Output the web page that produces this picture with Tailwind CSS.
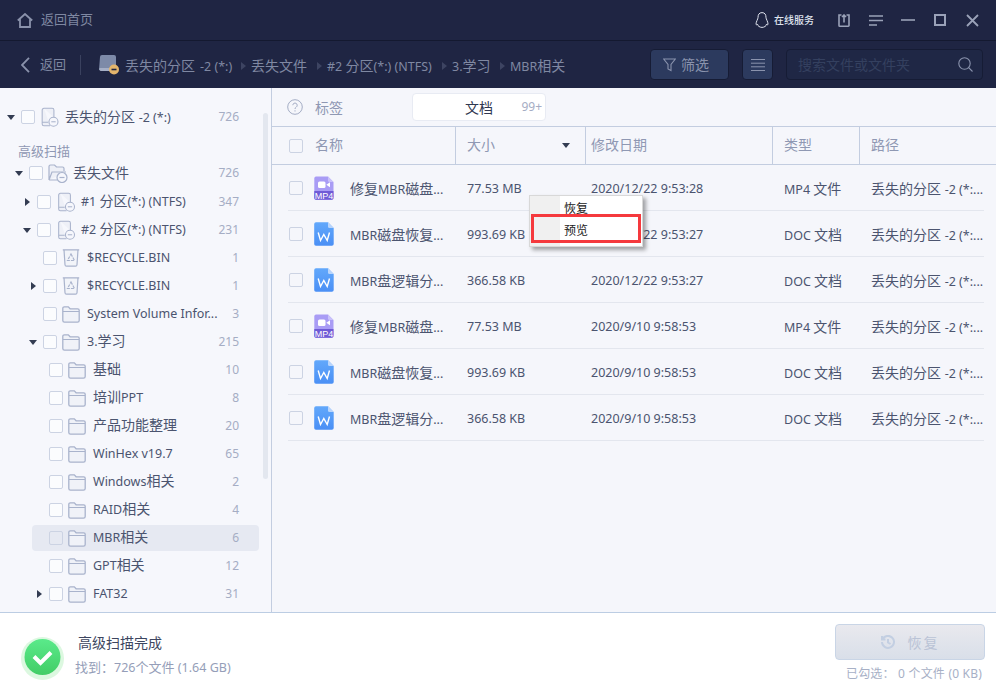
<!DOCTYPE html>
<html lang="zh"><head><meta charset="utf-8"><script src="https://cdn.jsdelivr.net/npm/@tailwindcss/browser@4"></script></head>
<body class="m-0 overflow-hidden">
<svg class="absolute w-0 h-0" width="0" height="0">
<defs>
<linearGradient id="dg" x1="0" y1="0" x2="0" y2="1"><stop offset="0" stop-color="#62a8fb"/><stop offset="1" stop-color="#4a8ff5"/></linearGradient>
<symbol id="drive" viewBox="0 0 20 23"><path d="M3 1.500h9.500a2 2 0 0 1 2 2v8.500M3 1.500a2 2 0 0 0-2 2v16a2 2 0 0 0 2 2h7M1 17.500h7" fill="#eef0f7" stroke="#a9b3cc" stroke-width="1.200"/><circle cx="14" cy="17" r="5.200" fill="#f6f7fc" stroke="#a9b3cc" stroke-width="1.200"/><path d="M11.500 17h5" stroke="#a9b3cc" stroke-width="1.200"/></symbol>
<symbol id="lostfolder" viewBox="0 0 20 20"><path d="M1 17V3.500a1.500 1.500 0 0 1 1.500-1.500h4l2 2h6a1.500 1.500 0 0 1 1.500 1.500V8M1 17l3-8h14M1 17h8" fill="#eef0f7" stroke="#a9b3cc" stroke-width="1.200"/><circle cx="14" cy="14.500" r="5" fill="#f6f7fc" stroke="#a9b3cc" stroke-width="1.200"/><path d="M11.500 14.500h5" stroke="#a9b3cc" stroke-width="1.200"/></symbol>
<symbol id="folder" viewBox="0 0 18 17"><path d="M.8 14.500V2.300A1.500 1.500 0 0 1 2.300.8h4l1.800 2h7.600a1.500 1.500 0 0 1 1.500 1.500v10.200a1.700 1.700 0 0 1-1.700 1.700H2.500a1.700 1.700 0 0 1-1.700-1.700z" fill="#f0f2f8" stroke="#a9b3cc" stroke-width="1.300"/><path d="M1 5.500h16" stroke="#a9b3cc" stroke-width="1"/></symbol>
<symbol id="bin" viewBox="0 0 18 18"><path d="M.8.800h16.400M2 .8l1 15a1.500 1.500 0 0 0 1.500 1.400h9a1.500 1.500 0 0 0 1.500-1.400l1-15" fill="#f2f4f9" stroke="#a9b3cc" stroke-width="1.200"/><path d="M9 5l3.500 6.500h-7z" fill="none" stroke="#a9b3cc" stroke-width="1.200" stroke-dasharray="3 1"/></symbol>
<symbol id="mp4" viewBox="0 0 20 24"><path d="M2 .5h12l5.500 5.500v16a1.800 1.800 0 0 1-1.800 1.800H2A1.800 1.800 0 0 1 .3 22V2A1.800 1.800 0 0 1 2 .5z" fill="#a99cf5"/><path d="M.3 15h19.200v7a1.800 1.800 0 0 1-1.800 1.800H2A1.800 1.800 0 0 1 .3 22z" fill="#6f5bd6"/><rect x="4" y="5.500" width="7.500" height="6.500" rx="1.500" fill="#fff"/><path d="M12.300 8.700l3.700-2.500v5z" fill="#fff"/><path d="M14 .5l5.500 5.500H15.500a1.500 1.500 0 0 1-1.500-1.500z" fill="#c9c1fa"/><text x="9.900" y="22.700" text-anchor="middle" font-family="Liberation Sans" font-size="9" fill="#fff">MP4</text></symbol>
<symbol id="doc" viewBox="0 0 20 24"><path d="M2 .3h12l5.700 5.700v16a1.800 1.800 0 0 1-1.800 1.800H2A1.800 1.800 0 0 1 .2 22V2A1.800 1.800 0 0 1 2 .3z" fill="url(#dg)"/><path d="M14 .3l5.700 5.700H15.500A1.500 1.500 0 0 1 14 4.500z" fill="#b9d5fc"/><path d="M4.200 10.500l2.300 8 3.300-6 3.400 6 2.300-8" fill="none" stroke="#fff" stroke-width="1.400"/></symbol>
<symbol id="left" viewBox="0 0 5 8"><path d="M0 0l5 4-5 4z" fill="#333c52"/></symbol>
<symbol id="down" viewBox="0 0 8 5"><path d="M0 0h8L4 5z" fill="#333c52"/></symbol>
</defs>
</svg>
<div class="relative w-[996px] h-[696px] flex flex-col overflow-hidden bg-[#f5f6fb] text-[14px] text-[#4b546f] font-['Noto_Sans','Noto_Sans_CJK_SC',sans-serif]">

<!-- title bar -->
<header class="h-[41px] shrink-0 flex items-center bg-[#1f2543] border-b border-[#141930] pl-[17px] pr-[17px]">
<svg width="16" height="15" viewBox="0 0 16 15" fill="none" stroke="#8a92ab" stroke-width="1.800"><path d="M.8 7.500L8 1l7.200 6.500M3 6v8h10V6"/></svg>
<span class="ml-[8px] text-[13px] text-[#7f88a2]">返回首页</span>
<svg class="ml-auto" width="14" height="16" viewBox="0 0 14 16" fill="none" stroke="#dfe3ee" stroke-width="1"><path d="M7 .6c3 0 4 2.200 4 5 0 1.500 2 4 2 6.500 0 1-1 .8-1.500 0 0 2-2.500 3.300-4.500 3.300s-4.500-1.300-4.500-3.300c-.5.800-1.500 1-1.500 0C1 9.600 3 7.100 3 5.600c0-2.800 1-5 4-5z"/></svg>
<span class="ml-[5px] text-[10px] font-medium text-[#dfe3ee] w-[40px] whitespace-nowrap">在线服务</span>
<svg class="ml-[24px]" width="12" height="13" viewBox="0 0 12 13" fill="none" stroke="#9aa2b8" stroke-width="1.600"><path d="M3.500 1H1v10.500a.7.700 0 0 0 .7.700h8.600a.7.700 0 0 0 .7-.7V1H8.500M6 8.500V1M4 3l2-2 2 2"/></svg>
<svg class="ml-[19px]" width="14" height="11" viewBox="0 0 14 11" fill="none" stroke="#9aa2b8" stroke-width="1.600"><path d="M0 1h14M0 5.500h14M0 10h8"/></svg>
<svg class="ml-[18px]" width="14" height="2" viewBox="0 0 14 2"><path d="M0 1h14" stroke="#9aa2b8" stroke-width="1.600"/></svg>
<svg class="ml-[19px]" width="12" height="12" viewBox="0 0 12 12" fill="none" stroke="#9aa2b8" stroke-width="2"><rect x="1" y="1" width="10" height="10"/></svg>
<svg class="ml-[20px]" width="13" height="13" viewBox="0 0 13 13" fill="none" stroke="#9aa2b8" stroke-width="1.800"><path d="M1 1l11 11M12 1L1 12"/></svg>
</header>

<!-- toolbar -->
<div class="h-[47px] shrink-0 flex items-center bg-[#1f2543] pl-[21px] text-[#7f88a2]">
<svg width="9" height="16" viewBox="0 0 9 16" fill="none" stroke="#8a92ab" stroke-width="1.800"><path d="M8 .8L1 8l7 7.200"/></svg>
<span class="ml-[10px] text-[13px]">返回</span>
<span class="ml-[14px] w-px h-[20px] bg-[#3a415e]"></span>
<svg class="ml-[18px]" width="21" height="20" viewBox="0 0 21 20"><path d="M3 0h12a2 2 0 0 1 2 2v13H0l1-13a2 2 0 0 1 2-2z" fill="#7d8aa8"/><path d="M.5 13H17v3H2a1.500 1.500 0 0 1-1.500-1.500z" fill="#a6afc6"/><circle cx="15" cy="14.500" r="5" fill="#e3b56c"/><path d="M12.500 14.500h5" stroke="#1f2543" stroke-width="1.600"/></svg>
<span class="ml-[5px] mt-[2px] whitespace-nowrap">丢失的分区</span><span class="ml-[5px] mt-[5px] w-[31px] text-[12.500px] whitespace-nowrap">-2 (*:)</span>
<svg class="ml-[10px] mt-[2px]" width="5" height="8" viewBox="0 0 5 8"><path d="M0 0l5 4-5 4z" fill="#3d4462"/></svg>
<span class="ml-[5px] mt-[2px] whitespace-nowrap">丢失文件</span>
<svg class="ml-[10px] mt-[2px]" width="5" height="8" viewBox="0 0 5 8"><path d="M0 0l5 4-5 4z" fill="#3d4462"/></svg>
<span class="ml-[5px] mt-[2px] whitespace-nowrap w-[105px]"><span class="text-[12.500px]">#2 </span>分区<span class="text-[12.500px]">(*:) (NTFS)</span></span>
<svg class="ml-[10px] mt-[2px]" width="5" height="8" viewBox="0 0 5 8"><path d="M0 0l5 4-5 4z" fill="#3d4462"/></svg>
<span class="ml-[5px] mt-[2px] whitespace-nowrap w-[38px]"><span class="text-[12.500px]">3.</span>学习</span>
<svg class="ml-[10px] mt-[2px]" width="5" height="8" viewBox="0 0 5 8"><path d="M0 0l5 4-5 4z" fill="#3d4462"/></svg>
<span class="ml-[5px] mt-[2px] whitespace-nowrap"><span class="text-[12.500px]">MBR</span>相关</span>
<div class="ml-auto flex items-center pr-[13px]">
<button class="w-[79px] h-[31px] rounded-[4px] bg-[#2c3a5e] border border-[#161c35] flex items-center pl-[12px] text-[#8a93ad]"><svg width="13" height="14" viewBox="0 0 13 14" fill="none" stroke="#8a93ad" stroke-width="1.100"><path d="M.7 1h11.600L8 6.500v6l-3-1.500V6.500z"/></svg><span class="ml-[5px]">筛选</span></button>
<button class="ml-[13px] w-[31px] h-[31px] rounded-[4px] bg-[#2c3a5e] border border-[#161c35] flex items-center justify-center"><svg width="14" height="12" viewBox="0 0 14 12" stroke="#8a93ad"><path d="M0 .5h14M0 4.200h14M0 7.800h14M0 11.500h14"/></svg></button>
<div class="ml-[13px] w-[197px] h-[31px] rounded-[4px] bg-[#1f2745] border border-[#161c35] flex items-center pl-[11px] pr-[9px] text-[#34405f]"><span>搜索文件或文件夹</span><svg class="ml-auto" width="15" height="15" viewBox="0 0 15 15" fill="none" stroke="#8a93ad" stroke-width="1.100"><circle cx="6.500" cy="6.500" r="5.700"/><path d="M10.700 10.700l3.800 3.800"/></svg></div>
</div>
</div>

<!-- main -->
<main class="flex-1 min-h-0 flex">
<!-- sidebar -->
<aside class="relative w-[272px] shrink-0 border-r border-[#c3cde0] bg-[#f6f7fc] overflow-hidden pt-[15px]">
<div class="absolute left-[263px] top-[25px] w-[5px] h-[366px] rounded-full bg-[#e3e7ef]"></div>

<div class="h-[28px] flex items-center pl-[7px] pr-[32px]"><svg width="8" height="5"><use href="#down"/></svg><span class="ml-[6px] w-[14px] h-[14px] rounded-[2px] border border-[#ccd3e3] bg-white/60"></span><svg class="ml-[5px]" width="20" height="20"><use href="#drive"/></svg><span class="ml-[5px] whitespace-nowrap">丢失的分区 <span class="text-[12.500px]">-2 (*:)</span></span><span class="ml-auto text-[12px] text-[#a5adc4]">726</span></div>
<div class="h-[28px] flex items-end pl-[18px] text-[13px] leading-[16px] text-[#8f98b3]">高级扫描</div>
<div class="h-[29px] pb-px flex items-center pl-[15px] pr-[32px]"><svg width="8" height="5"><use href="#down"/></svg><span class="ml-[6px] w-[14px] h-[14px] rounded-[2px] border border-[#ccd3e3] bg-white/60"></span><svg class="ml-[5px]" width="20" height="20"><use href="#lostfolder"/></svg><span class="ml-[5px] -mt-[2px] whitespace-nowrap">丢失文件</span><span class="ml-auto text-[12px] text-[#a5adc4]">726</span></div>
<div class="h-[28px] flex items-center pl-[25px] pr-[32px]"><svg class="mr-[7px]" width="5" height="8"><use href="#left"/></svg><span class="w-[14px] h-[14px] rounded-[2px] border border-[#ccd3e3] bg-white/60"></span><svg class="ml-[6px]" width="19" height="20"><use href="#drive"/></svg><span class="ml-[5px] -mt-[2px] whitespace-nowrap"><span class="text-[12.500px]">#1 </span>分区<span class="text-[12.500px]">(*:) (NTFS)</span></span><span class="ml-auto text-[12px] text-[#a5adc4]">347</span></div>
<div class="h-[28px] flex items-center pl-[23px] pr-[32px]"><svg class="mr-[6px]" width="8" height="5"><use href="#down"/></svg><span class="w-[14px] h-[14px] rounded-[2px] border border-[#ccd3e3] bg-white/60"></span><svg class="ml-[6px]" width="19" height="20"><use href="#drive"/></svg><span class="ml-[5px] -mt-[2px] whitespace-nowrap"><span class="text-[12.500px]">#2 </span>分区<span class="text-[12.500px]">(*:) (NTFS)</span></span><span class="ml-auto text-[12px] text-[#a5adc4]">231</span></div>
<div class="h-[28px] flex items-center pl-[43px] pr-[32px]"><span class="w-[14px] h-[14px] rounded-[2px] border border-[#ccd3e3] bg-white/60"></span><svg class="ml-[5px]" width="18" height="18"><use href="#bin"/></svg><span class="ml-[7px] whitespace-nowrap text-[12.500px]">$RECYCLE.BIN</span><span class="ml-auto text-[12px] text-[#a5adc4]">1</span></div>
<div class="h-[28px] flex items-center pl-[31px] pr-[32px]"><svg class="mr-[7px]" width="5" height="8"><use href="#left"/></svg><span class="w-[14px] h-[14px] rounded-[2px] border border-[#ccd3e3] bg-white/60"></span><svg class="ml-[5px]" width="18" height="18"><use href="#bin"/></svg><span class="ml-[7px] whitespace-nowrap text-[12.500px]">$RECYCLE.BIN</span><span class="ml-auto text-[12px] text-[#a5adc4]">1</span></div>
<div class="h-[28px] flex items-center pl-[43px] pr-[32px]"><span class="w-[14px] h-[14px] rounded-[2px] border border-[#ccd3e3] bg-white/60"></span><svg class="ml-[5px]" width="18" height="17"><use href="#folder"/></svg><span class="ml-[7px] whitespace-nowrap text-[12.500px]">System Volume Infor...</span><span class="ml-auto text-[12px] text-[#a5adc4]">3</span></div>
<div class="h-[28px] flex items-center pl-[29px] pr-[32px]"><svg class="mr-[6px]" width="8" height="5"><use href="#down"/></svg><span class="w-[14px] h-[14px] rounded-[2px] border border-[#ccd3e3] bg-white/60"></span><svg class="ml-[5px]" width="18" height="17"><use href="#folder"/></svg><span class="ml-[7px] -mt-[2px] whitespace-nowrap"><span class="text-[12.500px]">3.</span>学习</span><span class="ml-auto text-[12px] text-[#a5adc4]">215</span></div>
<div class="h-[28px] flex items-center pl-[49px] pr-[32px]"><span class="w-[14px] h-[14px] rounded-[2px] border border-[#ccd3e3] bg-white/60"></span><svg class="ml-[5px]" width="18" height="17"><use href="#folder"/></svg><span class="ml-[7px] -mt-[4px] whitespace-nowrap">基础</span><span class="ml-auto text-[12px] text-[#a5adc4]">10</span></div>
<div class="h-[28px] flex items-center pl-[49px] pr-[32px]"><span class="w-[14px] h-[14px] rounded-[2px] border border-[#ccd3e3] bg-white/60"></span><svg class="ml-[5px]" width="18" height="17"><use href="#folder"/></svg><span class="ml-[7px] -mt-[2px] whitespace-nowrap">培训<span class="text-[12.500px]">PPT</span></span><span class="ml-auto text-[12px] text-[#a5adc4]">8</span></div>
<div class="h-[28px] flex items-center pl-[49px] pr-[32px]"><span class="w-[14px] h-[14px] rounded-[2px] border border-[#ccd3e3] bg-white/60"></span><svg class="ml-[5px]" width="18" height="17"><use href="#folder"/></svg><span class="ml-[7px] -mt-[4px] whitespace-nowrap">产品功能整理</span><span class="ml-auto text-[12px] text-[#a5adc4]">20</span></div>
<div class="h-[28px] flex items-center pl-[49px] pr-[32px]"><span class="w-[14px] h-[14px] rounded-[2px] border border-[#ccd3e3] bg-white/60"></span><svg class="ml-[5px]" width="18" height="17"><use href="#folder"/></svg><span class="ml-[7px] whitespace-nowrap text-[12.500px]">WinHex v19.7</span><span class="ml-auto text-[12px] text-[#a5adc4]">65</span></div>
<div class="h-[28px] flex items-center pl-[49px] pr-[32px]"><span class="w-[14px] h-[14px] rounded-[2px] border border-[#ccd3e3] bg-white/60"></span><svg class="ml-[5px]" width="18" height="17"><use href="#folder"/></svg><span class="ml-[7px] -mt-[2px] whitespace-nowrap"><span class="text-[12.500px]">Windows</span>相关</span><span class="ml-auto text-[12px] text-[#a5adc4]">2</span></div>
<div class="h-[28px] flex items-center pl-[49px] pr-[32px]"><span class="w-[14px] h-[14px] rounded-[2px] border border-[#ccd3e3] bg-white/60"></span><svg class="ml-[5px]" width="18" height="17"><use href="#folder"/></svg><span class="ml-[7px] -mt-[2px] whitespace-nowrap"><span class="text-[12.500px]">RAID</span>相关</span><span class="ml-auto text-[12px] text-[#a5adc4]">4</span></div>
<div class="h-[26px] my-[1px] ml-[32px] mr-[12px] rounded-[4px] bg-[#e6e9f2] flex items-center pl-[17px] pr-[20px]"><span class="w-[14px] h-[14px] rounded-[2px] border border-[#ccd3e3]"></span><svg class="ml-[5px]" width="18" height="17"><use href="#folder"/></svg><span class="ml-[7px] -mt-[2px] whitespace-nowrap"><span class="text-[12.500px]">MBR</span>相关</span><span class="ml-auto text-[12px] text-[#a5adc4]">6</span></div>
<div class="h-[28px] flex items-center pl-[49px] pr-[32px]"><span class="w-[14px] h-[14px] rounded-[2px] border border-[#ccd3e3] bg-white/60"></span><svg class="ml-[5px]" width="18" height="17"><use href="#folder"/></svg><span class="ml-[7px] -mt-[2px] whitespace-nowrap"><span class="text-[12.500px]">GPT</span>相关</span><span class="ml-auto text-[12px] text-[#a5adc4]">12</span></div>
<div class="h-[28px] flex items-center pl-[37px] pr-[32px]"><svg class="mr-[7px]" width="5" height="8"><use href="#left"/></svg><span class="w-[14px] h-[14px] rounded-[2px] border border-[#ccd3e3] bg-white/60"></span><svg class="ml-[5px]" width="18" height="17"><use href="#folder"/></svg><span class="ml-[7px] whitespace-nowrap text-[12.500px]">FAT32</span><span class="ml-auto text-[12px] text-[#a5adc4]">31</span></div>
</aside>

<!-- content -->
<section class="flex-1 min-w-0 flex flex-col">
<div class="h-[39px] shrink-0 flex items-center pl-[15px] border-b border-[#c3cde0]">
<svg width="16" height="16" viewBox="0 0 16 16" fill="none" stroke="#a4adc5" stroke-width="1"><circle cx="8" cy="8" r="7.300"/><path d="M5.800 6.200a2.200 2.200 0 1 1 3.400 1.900c-.8.500-1.200 1-1.200 1.900M8 11.300v1.200"/></svg>
<span class="ml-[12px] text-[#8f98b3]">标签</span>
<div class="ml-[69px] w-[134px] h-[28px] rounded-[4px] bg-white border border-[#e8ebf3] flex items-center pl-[52px] pr-[3px] text-[#2f3750]"><span>文档</span><span class="ml-auto text-[12px] text-[#a5adc4]">99+</span></div>
</div>
<div class="h-[38px] shrink-0 flex items-stretch border-b border-[#c3cde0] text-[#8f98b3]">
<div class="w-[184px] flex items-center pl-[17px] border-r border-[#c3cde0]"><span class="w-[14px] h-[14px] rounded-[2px] border border-[#ccd3e3]"></span><span class="ml-[12px] -mt-[2px]">名称</span></div>
<div class="w-[130px] flex items-center pl-[11px] pr-[15px] border-r border-[#c3cde0]"><span class="-mt-[2px]">大小</span><svg class="ml-auto" width="8" height="5"><use href="#down"/></svg></div>
<div class="w-[187px] flex items-center pl-[5px] border-r border-[#c3cde0]"><span class="-mt-[2px]">修改日期</span></div>
<div class="w-[87px] flex items-center pl-[11px] border-r border-[#c3cde0]"><span class="-mt-[2px]">类型</span></div>
<div class="flex-1 flex items-center pl-[11px]"><span class="-mt-[2px]">路径</span></div>
</div>
<div class="pl-[16px] pr-[12px]">
<div class="h-[46px] flex items-center border-b border-[#e3e6ee]"><span class="w-[14px] h-[14px] ml-px rounded-[2px] border border-[#ccd3e3]"></span><svg class="ml-[11px]" width="20" height="24"><use href="#mp4"/></svg><span class="ml-[16px] mt-[2px] w-[117px] whitespace-nowrap">修复<span class="text-[12.500px]">MBR</span>磁盘<span class="text-[12.500px]">...</span></span><span class="w-[124px] mt-[4px] whitespace-nowrap text-[12.500px]">77.53 MB</span><span class="w-[193px] mt-[4px] whitespace-nowrap text-[12.500px]">2020/12/22 9:53:28</span><span class="w-[87px] mt-[2px] whitespace-nowrap"><span class="text-[12.500px]">MP4 </span>文件</span><span class="mt-[2px] whitespace-nowrap">丢失的分区 <span class="text-[12.500px]">-2 (*:...</span></span></div>
<div class="h-[46px] flex items-center border-b border-[#e3e6ee]"><span class="w-[14px] h-[14px] ml-px rounded-[2px] border border-[#ccd3e3]"></span><svg class="ml-[11px]" width="20" height="24"><use href="#doc"/></svg><span class="ml-[16px] mt-[2px] w-[117px] whitespace-nowrap"><span class="text-[12.500px]">MBR</span>磁盘恢复<span class="text-[12.500px]">...</span></span><span class="w-[124px] mt-[4px] whitespace-nowrap text-[12.500px]">993.69 KB</span><span class="w-[193px] mt-[4px] whitespace-nowrap text-[12.500px]">2020/12/22 9:53:27</span><span class="w-[87px] mt-[2px] whitespace-nowrap"><span class="text-[12.500px]">DOC </span>文档</span><span class="mt-[2px] whitespace-nowrap">丢失的分区 <span class="text-[12.500px]">-2 (*:...</span></span></div>
<div class="h-[46px] flex items-center border-b border-[#e3e6ee]"><span class="w-[14px] h-[14px] ml-px rounded-[2px] border border-[#ccd3e3]"></span><svg class="ml-[11px]" width="20" height="24"><use href="#doc"/></svg><span class="ml-[16px] mt-[2px] w-[117px] whitespace-nowrap"><span class="text-[12.500px]">MBR</span>盘逻辑分<span class="text-[12.500px]">...</span></span><span class="w-[124px] mt-[4px] whitespace-nowrap text-[12.500px]">366.58 KB</span><span class="w-[193px] mt-[4px] whitespace-nowrap text-[12.500px]">2020/12/22 9:53:27</span><span class="w-[87px] mt-[2px] whitespace-nowrap"><span class="text-[12.500px]">DOC </span>文档</span><span class="mt-[2px] whitespace-nowrap">丢失的分区 <span class="text-[12.500px]">-2 (*:...</span></span></div>
<div class="h-[46px] flex items-center border-b border-[#e3e6ee]"><span class="w-[14px] h-[14px] ml-px rounded-[2px] border border-[#ccd3e3]"></span><svg class="ml-[11px]" width="20" height="24"><use href="#mp4"/></svg><span class="ml-[16px] mt-[2px] w-[117px] whitespace-nowrap">修复<span class="text-[12.500px]">MBR</span>磁盘<span class="text-[12.500px]">...</span></span><span class="w-[124px] mt-[4px] whitespace-nowrap text-[12.500px]">77.53 MB</span><span class="w-[193px] mt-[4px] whitespace-nowrap text-[12.500px]">2020/9/10 9:58:53</span><span class="w-[87px] mt-[2px] whitespace-nowrap"><span class="text-[12.500px]">MP4 </span>文件</span><span class="mt-[2px] whitespace-nowrap">丢失的分区 <span class="text-[12.500px]">-2 (*:...</span></span></div>
<div class="h-[46px] flex items-center border-b border-[#e3e6ee]"><span class="w-[14px] h-[14px] ml-px rounded-[2px] border border-[#ccd3e3]"></span><svg class="ml-[11px]" width="20" height="24"><use href="#doc"/></svg><span class="ml-[16px] mt-[2px] w-[117px] whitespace-nowrap"><span class="text-[12.500px]">MBR</span>磁盘恢复<span class="text-[12.500px]">...</span></span><span class="w-[124px] mt-[4px] whitespace-nowrap text-[12.500px]">993.69 KB</span><span class="w-[193px] mt-[4px] whitespace-nowrap text-[12.500px]">2020/9/10 9:58:53</span><span class="w-[87px] mt-[2px] whitespace-nowrap"><span class="text-[12.500px]">DOC </span>文档</span><span class="mt-[2px] whitespace-nowrap">丢失的分区 <span class="text-[12.500px]">-2 (*:...</span></span></div>
<div class="h-[46px] flex items-center border-b border-[#e3e6ee]"><span class="w-[14px] h-[14px] ml-px rounded-[2px] border border-[#ccd3e3]"></span><svg class="ml-[11px]" width="20" height="24"><use href="#doc"/></svg><span class="ml-[16px] mt-[2px] w-[117px] whitespace-nowrap"><span class="text-[12.500px]">MBR</span>盘逻辑分<span class="text-[12.500px]">...</span></span><span class="w-[124px] mt-[4px] whitespace-nowrap text-[12.500px]">366.58 KB</span><span class="w-[193px] mt-[4px] whitespace-nowrap text-[12.500px]">2020/9/10 9:58:53</span><span class="w-[87px] mt-[2px] whitespace-nowrap"><span class="text-[12.500px]">DOC </span>文档</span><span class="mt-[2px] whitespace-nowrap">丢失的分区 <span class="text-[12.500px]">-2 (*:...</span></span></div>
</div>
</section>
</main>

<!-- footer -->
<footer class="h-[84px] shrink-0 bg-white border-t border-[#bccde3] flex pl-[21px] pr-[11px]">
<svg class="mt-[22px]" width="43" height="46" viewBox="0 0 43 46"><circle cx="21.500" cy="23.500" r="21.500" fill="#dcf8e0"/><defs><linearGradient id="g" x1="0" y1="0" x2="0" y2="1"><stop offset="0" stop-color="#5aea8a"/><stop offset="1" stop-color="#42cd66"/></linearGradient></defs><circle cx="21.500" cy="22" r="18" fill="url(#g)"/><path d="M13 21.500l6.500 6.500 10.500-10.500" fill="none" stroke="#fff" stroke-width="4"/></svg>
<div class="ml-[14px] mt-[18px]">
<div class="text-[#3d4660] leading-[24px]">高级扫描完成</div>
<div class="ml-[-3px] text-[13px] leading-[24px] text-[#959eb8] whitespace-nowrap">找到：<span class="text-[12.500px]">726</span>个文件 <span class="text-[12.500px]">(1.64 GB)</span></div>
</div>
<div class="ml-auto mt-[11px] flex flex-col items-end">
<button class="w-[150px] h-[36px] rounded-[4px] border border-[#c9d5e6] bg-gradient-to-b from-[#e9e9ee] to-[#d9dfe9] flex items-center justify-center text-[#bac3d6]"><svg width="14" height="14" viewBox="0 0 14 14" fill="none" stroke="#c3cfe2" stroke-width="2"><path d="M1.500 4.500A6 6 0 1 1 1 7M1 1v3.500h3.500M7 4v3.500l2.500 1.500"/></svg><span class="ml-[13px] tracking-[2px]">恢复</span></button>
<div class="mt-[5px] mr-[3px] text-[12px] tracking-[0.200px] leading-[18px] whitespace-nowrap text-[#a7b0c6]">已勾选： 0 个文件 (0 KB)</div>
</div>
</footer>

<!-- context menu -->
<div class="absolute left-[529px] top-[195px] w-[114px] h-[52px] flex bg-white border border-[#d8d8d8] shadow-[3px_3px_4px_rgba(0,0,0,0.35)] text-[12px] text-[#222]">
<div class="w-[30px] bg-[#f0f0f0]"></div>
<div class="flex flex-col pl-[4px] pt-[3px]"><span class="leading-[20px]">恢复</span><span class="mt-[2px] leading-[20px]">预览</span></div>
<div class="absolute left-[1px] top-[18px] w-[110px] h-[29px] border-[3px] border-[#f5393d]"></div>
</div>
</div>
</body></html>
